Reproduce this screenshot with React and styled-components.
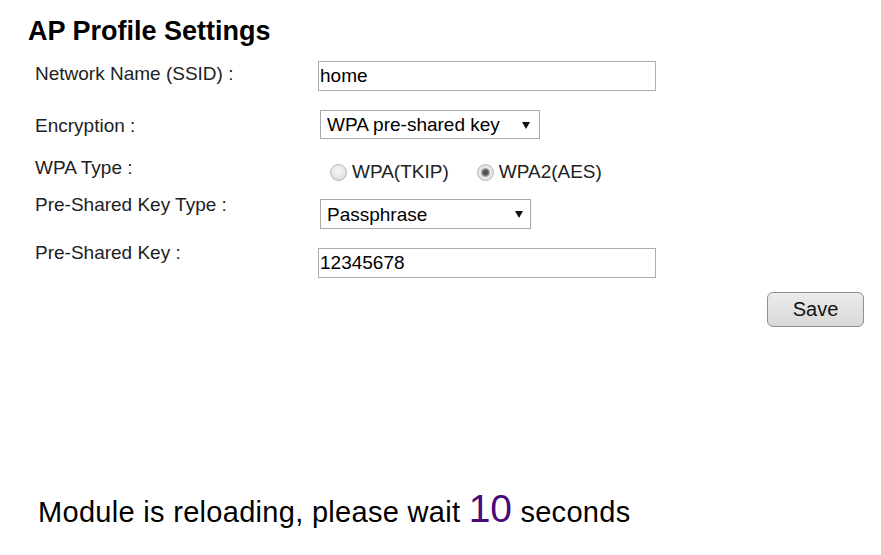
import React from 'react';
import styled, { createGlobalStyle } from 'styled-components';

const GlobalStyle = createGlobalStyle`
  body {
    margin: 0;
    background: #fff;
    font-family: "Liberation Sans", Arial, sans-serif;
    color: #111;
  }
`;

const Page = styled.div`
  padding: 16px 17px 0 0;
`;

const Title = styled.h1`
  margin: 0 0 0 28px;
  font-size: 27px;
  line-height: 31px;
  font-weight: bold;
  color: #000;
`;

const Form = styled.form`
  margin-top: 14px;
  padding-left: 35px;
`;

const Row = styled.div`
  display: flex;
  align-items: flex-start;
  margin-top: ${p => p.$gap || 0}px;
`;

const Label = styled.div`
  width: 283px;
  flex-shrink: 0;
  padding-top: ${p => p.$dy || 0}px;
  font-size: 19px;
  line-height: 22px;
  color: #222;
`;

const Field = styled.div`
  display: flex;
  padding-top: ${p => p.$dy || 0}px;
`;

const TextInput = styled.input`
  box-sizing: border-box;
  width: 338px;
  height: 30px;
  margin: 0;
  padding: 0 1px;
  border: 1px solid #abadb3;
  border-radius: 0;
  font-family: inherit;
  font-size: 19px;
  color: #000;
  outline: none;
`;

const SelectBox = styled.div`
  position: relative;
  margin-left: 2px;
  width: ${p => p.$w}px;

  &::after {
    content: '';
    position: absolute;
    top: 50%;
    right: ${p => p.$arrow}px;
    margin-top: -3px;
    border-left: 4px solid transparent;
    border-right: 4px solid transparent;
    border-top: 7px solid #111;
    pointer-events: none;
  }
`;

const Select = styled.select`
  appearance: none;
  box-sizing: border-box;
  width: 100%;
  height: ${p => p.$h}px;
  margin: 0;
  padding: 0 22px 0 6px;
  border: 1px solid #a9a9a9;
  border-radius: 0;
  background: #fff;
  font-family: inherit;
  font-size: 19px;
  color: #000;
  outline: none;
`;

const RadioGroup = styled.div`
  display: flex;
  align-items: center;
  gap: 28px;
  height: 22px;
  margin-left: 12px;
  padding-top: 4px;
`;

const RadioOption = styled.label`
  display: flex;
  align-items: center;
  gap: 5px;
  font-size: 19px;
  line-height: 22px;
  color: #222;
`;

const Radio = styled.input.attrs({ type: 'radio' })`
  appearance: none;
  box-sizing: border-box;
  width: 17px;
  height: 17px;
  margin: 0;
  border-radius: 50%;
  border: 1px solid #b5b5b5;
  background: radial-gradient(circle at 50% 40%, #f7f7f7 0, #e6e6e6 55%, #d4d4d4 100%);

  &:checked {
    background: radial-gradient(circle, #4a4a4a 0, #5c5c5c 2.5px, #a8a8a8 4px, #e8e8e8 5px, #dadada 100%);
  }
`;

const SaveRow = styled.div`
  display: flex;
  justify-content: flex-end;
  margin-top: 14px;
`;

const SaveButton = styled.button`
  width: 97px;
  height: 35px;
  padding: 0;
  border: 1px solid #909090;
  border-radius: 6px;
  background: linear-gradient(#ececec, #d8d8d8);
  font-family: inherit;
  font-size: 20px;
  color: #111;
`;

const Message = styled.p`
  margin: 168px 0 0 38px;
  font-size: 29px;
  line-height: 34px;
  letter-spacing: 0.3px;
  color: #000;
`;

const Count = styled.span`
  font-size: 39px;
  line-height: 0;
  letter-spacing: 0;
  color: #4b0a78;
`;

export default function App() {
  return (
    <Page>
      <GlobalStyle />
      <Title>AP Profile Settings</Title>
      <Form onSubmit={e => e.preventDefault()}>
        <Row>
          <Label $dy={2}>Network Name (SSID) :</Label>
          <Field>
            <TextInput defaultValue="home" />
          </Field>
        </Row>
        <Row $gap={19}>
          <Label $dy={5}>Encryption :</Label>
          <Field>
            <SelectBox $w={220} $arrow={10}>
              <Select $h={29} defaultValue="psk">
                <option value="none">None</option>
                <option value="wep">WEP</option>
                <option value="psk">WPA pre-shared key</option>
              </Select>
            </SelectBox>
          </Field>
        </Row>
        <Row $gap={18}>
          <Label>WPA Type :</Label>
          <RadioGroup>
            <RadioOption>
              <Radio name="wpa" value="tkip" />
              WPA(TKIP)
            </RadioOption>
            <RadioOption>
              <Radio name="wpa" value="aes" defaultChecked />
              WPA2(AES)
            </RadioOption>
          </RadioGroup>
        </Row>
        <Row $gap={11}>
          <Label>Pre-Shared Key Type :</Label>
          <Field $dy={5}>
            <SelectBox $w={211} $arrow={8}>
              <Select $h={30} defaultValue="pass">
                <option value="pass">Passphrase</option>
                <option value="hex">Hex (64 characters)</option>
              </Select>
            </SelectBox>
          </Field>
        </Row>
        <Row $gap={13}>
          <Label>Pre-Shared Key :</Label>
          <Field $dy={6}>
            <TextInput defaultValue="12345678" />
          </Field>
        </Row>
        <SaveRow>
          <SaveButton type="submit">Save</SaveButton>
        </SaveRow>
      </Form>
      <Message>
        Module is reloading, please wait <Count>10</Count> seconds
      </Message>
    </Page>
  );
}
